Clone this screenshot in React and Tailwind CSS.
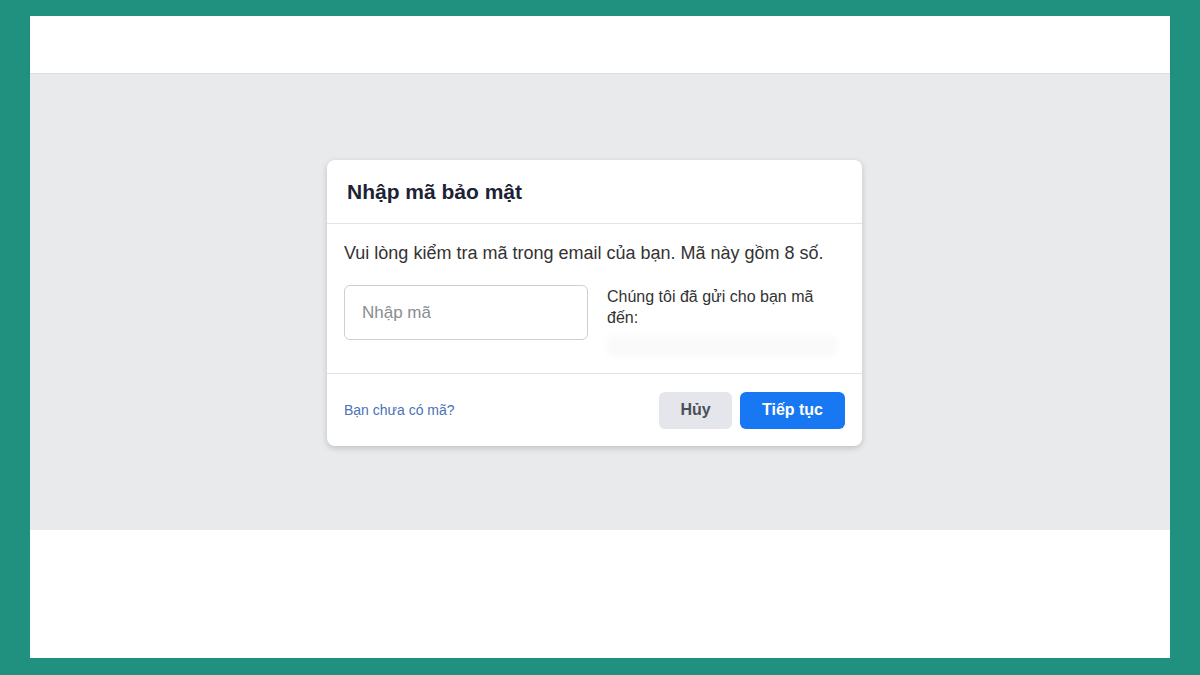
export default function App() {
  return (
    <div
      className="w-[1200px] h-[675px] bg-[#21917f] pt-[16px] px-[30px] pb-[17px]"
      style={{ fontFamily: '"Liberation Sans", Arial, Helvetica, sans-serif' }}
    >
      <div className="h-full flex flex-col">
        <div className="h-[58px] bg-white border-b border-[#dcdfe2] shadow-[0_1px_2px_rgba(0,0,0,0.08)]" />
        <div className="flex-1 bg-[#e8eaeb] pt-[86px] pl-[297px]">
          <div className="w-[535px] bg-white rounded-lg shadow-[0_2px_6px_rgba(0,0,0,0.18)]">
            <div className="h-[64px] flex items-center px-5 border-b border-[#e1e3e6]">
              <h2 className="text-[21px] font-bold text-[#1d2235]">Nhập mã bảo mật</h2>
            </div>
            <div className="px-[17px] pt-[18px] pb-[17px]">
              <p className="text-[18px] leading-[22px] text-[#333]">
                Vui lòng kiểm tra mã trong email của bạn. Mã này gồm 8 số.
              </p>
              <div className="flex mt-[21px]">
                <div className="w-[244px] h-[55px] border border-[#ccd0d5] rounded-md flex items-center px-[17px] shrink-0">
                  <span className="text-[17px] text-[#8a8d91]">Nhập mã</span>
                </div>
                <div className="ml-[19px] pt-[1px]">
                  <p className="text-[16px] leading-[21px] text-[#333] w-[235px]">
                    Chúng tôi đã gửi cho bạn mã đến:
                  </p>
                  <div className="mt-[8px] h-[20px] w-[230px] rounded bg-[#fafafa] blur-[2px]" />
                </div>
              </div>
            </div>
            <div className="h-[73px] border-t border-[#e1e3e6] flex items-center justify-between pl-[17px] pr-[17px]">
              <span className="text-[14px] text-[#4a72b5]">Bạn chưa có mã?</span>
              <div className="flex gap-2">
                <button className="w-[73px] h-[37px] rounded-md bg-[#e4e6eb] text-[#4b4f56] text-[16px] font-bold">
                  Hủy
                </button>
                <button className="w-[105px] h-[37px] rounded-md bg-[#1877f2] text-white text-[16px] font-bold">
                  Tiếp tục
                </button>
              </div>
            </div>
          </div>
        </div>
        <div className="h-[128px] bg-white" />
      </div>
    </div>
  );
}
